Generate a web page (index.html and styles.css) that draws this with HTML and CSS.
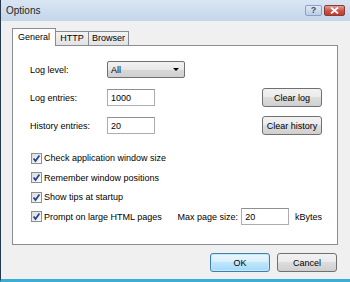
FILE: index.html
```html
<!DOCTYPE html>
<html lang="en">
<head>
    <meta charset="UTF-8">
    <title>Options</title>
    <link rel="stylesheet" href="styles.css">
</head>
<body>
    <div class="window">
        <div class="titlebar">
            <span class="title">Options</span>
            <div class="caption-buttons">
                <span class="cap-btn help">?</span>
                <span class="cap-btn close">
                    <svg width="9" height="7" viewBox="0 0 9 7"><path d="M1 0.5 L8 6.5 M8 0.5 L1 6.5" stroke="#fff" stroke-width="1.8"/></svg>
                </span>
            </div>
        </div>
        <div class="client">
            <div class="tabs">
                <div class="tab tab-general active">General</div>
                <div class="tab tab-http">HTTP</div>
                <div class="tab tab-browser">Browser</div>
            </div>
            <div class="panel">
                <div class="row">
                    <span class="field-label">Log level:</span>
                    <div class="select">All<span class="arrow"></span></div>
                </div>
                <div class="row">
                    <span class="field-label">Log entries:</span>
                    <div class="textbox">1000</div>
                    <button class="btn side-btn">Clear log</button>
                </div>
                <div class="row row-history">
                    <span class="field-label">History entries:</span>
                    <div class="textbox">20</div>
                    <button class="btn side-btn">Clear history</button>
                </div>
                <div class="checks">
                    <div class="check-row">
                        <span class="checkbox"><svg width="11" height="11" viewBox="0 0 11 11"><path d="M2.6 5.4 L4.5 8 L8.4 2.4" fill="none" stroke="#21419a" stroke-width="1.7"/></svg></span>
                        <span>Check application window size</span>
                    </div>
                    <div class="check-row">
                        <span class="checkbox"><svg width="11" height="11" viewBox="0 0 11 11"><path d="M2.6 5.4 L4.5 8 L8.4 2.4" fill="none" stroke="#21419a" stroke-width="1.7"/></svg></span>
                        <span>Remember window positions</span>
                    </div>
                    <div class="check-row">
                        <span class="checkbox"><svg width="11" height="11" viewBox="0 0 11 11"><path d="M2.6 5.4 L4.5 8 L8.4 2.4" fill="none" stroke="#21419a" stroke-width="1.7"/></svg></span>
                        <span>Show tips at startup</span>
                    </div>
                    <div class="check-row">
                        <span class="checkbox"><svg width="11" height="11" viewBox="0 0 11 11"><path d="M2.6 5.4 L4.5 8 L8.4 2.4" fill="none" stroke="#21419a" stroke-width="1.7"/></svg></span>
                        <span class="check-text-wide">Prompt on large HTML pages</span>
                        <span class="size-label">Max page size:</span>
                        <div class="textbox">20</div>
                        <span class="unit">kBytes</span>
                    </div>
                </div>
            </div>
            <div class="dialog-buttons">
                <button class="btn default">OK</button>
                <button class="btn">Cancel</button>
            </div>
        </div>
    </div>
</body>
</html>
```

FILE: styles.css
```css
html, body {
    margin: 0;
}
body {
    width: 350px;
    height: 282px;
    overflow: hidden;
    font-family: 'Liberation Sans', Arial, sans-serif;
    font-size: 9px;
    color: #000;
}
.window {
    height: 282px;
    box-sizing: border-box;
    border-left: 1px solid #24384e;
    border-bottom: 3px solid #3aaed8;
    background: #f0f0f0;
    display: flex;
    flex-direction: column;
}
.titlebar {
    height: 21px;
    flex: none;
    display: flex;
    align-items: center;
    padding: 0 5px 0 5px;
    background: linear-gradient(#d9e5f3, #c4d6eb);
}
.title {
    flex: 1;
    font-size: 10px;
    color: #1e1e1e;
}
.caption-buttons {
    display: flex;
    gap: 2px;
    margin-top: -1px;
}
.cap-btn {
    height: 11px;
    box-sizing: border-box;
    border-radius: 2px;
    display: flex;
    align-items: center;
    justify-content: center;
}
.help {
    width: 17px;
    border: 1px solid #8aa3c0;
    background: linear-gradient(#dfe9f5, #b9cde6);
    color: #3c4e66;
    font-size: 9px;
    font-weight: bold;
}
.close {
    width: 21px;
    border: 1px solid #8c3a32;
    background: linear-gradient(#e0a197, #c75146 55%, #c13b2f);
}
.client {
    flex: 1;
    padding: 7px 12px 0 11px;
}
.tabs {
    display: flex;
    align-items: flex-end;
    height: 17px;
}
.tab {
    box-sizing: border-box;
    height: 14px;
    border: 1px solid #898c95;
    border-bottom: none;
    border-left: none;
    background: linear-gradient(#f3f3f3, #e2e2e2);
    text-align: center;
    line-height: 13px;
}
.tab.active {
    position: relative;
    height: 18px;
    margin-bottom: -1px;
    border-left: 1px solid #898c95;
    background: #fff;
    line-height: 16px;
}
.tab-general {
    width: 44px;
}
.tab-http {
    width: 33px;
}
.tab-browser {
    width: 40px;
}
.panel {
    height: 200px;
    box-sizing: border-box;
    border: 1px solid #898c95;
    background: #fff;
    padding: 14px 15px 0 17px;
}
.row {
    display: flex;
    align-items: center;
    height: 19px;
    margin-bottom: 9px;
}
.row-history {
    margin-bottom: 0;
}
.field-label {
    width: 77px;
}
.select {
    width: 78px;
    height: 17px;
    box-sizing: border-box;
    border: 1px solid #707070;
    border-radius: 2px;
    background: linear-gradient(#f2f2f2, #e8e8e8 50%, #d8d8d8 51%, #d0d0d0);
    display: flex;
    align-items: center;
    padding-left: 3px;
}
.arrow {
    margin-left: auto;
    margin-right: 5px;
    border-left: 3px solid transparent;
    border-right: 3px solid transparent;
    border-top: 3px solid #000;
}
.textbox {
    width: 48px;
    height: 17px;
    box-sizing: border-box;
    border: 1px solid #abadb3;
    border-top-color: #8e8f8f;
    background: #fff;
    display: flex;
    align-items: center;
    padding-left: 3px;
}
.btn {
    height: 19px;
    box-sizing: border-box;
    border: 1px solid #707070;
    border-radius: 3px;
    background: linear-gradient(#f2f2f2, #ebebeb 45%, #dddddd 50%, #cfcfcf);
    font-family: inherit;
    font-size: 9px;
    color: #000;
    padding: 0;
}
.side-btn {
    width: 60px;
    margin-left: auto;
}
.checks {
    margin-top: 13.5px;
}
.check-row {
    display: flex;
    align-items: center;
    height: 19.5px;
}
.checkbox {
    width: 11px;
    height: 11px;
    box-sizing: border-box;
    margin: 0 2px 0 1px;
    border: 1px solid #8e8f8f;
    background: linear-gradient(135deg, #dcdcdc, #fbfbfb);
    display: flex;
    align-items: center;
    justify-content: center;
}
.checkbox svg {
    flex: none;
}
.check-text-wide {
    width: 134px;
}
.size-label {
    width: 64px;
}
.unit {
    margin-left: 6px;
}
.dialog-buttons {
    display: flex;
    justify-content: flex-end;
    gap: 7px;
    margin-top: 8px;
    padding-right: 1px;
}
.dialog-buttons .btn {
    width: 60px;
}
.btn.default {
    border-color: #3c7fb1;
    background: linear-gradient(#eaf6fd, #d9f0fc 45%, #bee6fd 50%, #a7d9f5);
    box-shadow: inset 0 0 0 1px #c6e8fb;
}
```
